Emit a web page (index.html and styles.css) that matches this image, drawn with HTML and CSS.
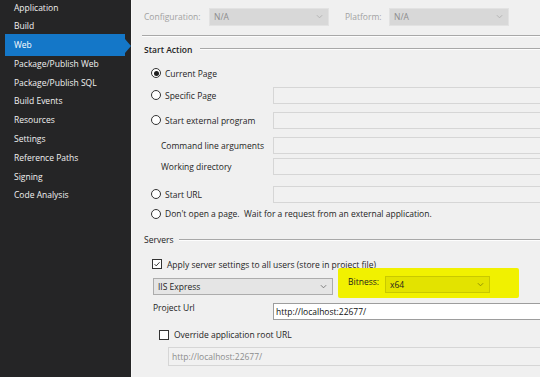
FILE: index.html
```html
<!DOCTYPE html>
<html lang="en">
<head>
    <meta charset="UTF-8">
    <title>Project Properties - Web</title>
    <link rel="stylesheet" href="styles.css">
</head>
<body>
    <div class="app">
        <nav class="sidebar">
            <div class="nav-list">
                <div class="nav-item">Application</div>
                <div class="nav-item">Build</div>
                <div class="nav-item active">Web</div>
                <div class="nav-item">Package/Publish Web</div>
                <div class="nav-item">Package/Publish SQL</div>
                <div class="nav-item">Build Events</div>
                <div class="nav-item">Resources</div>
                <div class="nav-item">Settings</div>
                <div class="nav-item">Reference Paths</div>
                <div class="nav-item">Signing</div>
                <div class="nav-item">Code Analysis</div>
            </div>
        </nav>

        <main class="page">
            <div class="config-bar">
                <span class="config-label">Configuration:</span>
                <div class="select disabled config-select">
                    <span>N/A</span>
                    <svg class="chev" viewBox="0 0 8 5"><path d="M1 1l3 3 3-3"/></svg>
                </div>
                <span class="config-label platform-label">Platform:</span>
                <div class="select disabled config-select">
                    <span>N/A</span>
                    <svg class="chev" viewBox="0 0 8 5"><path d="M1 1l3 3 3-3"/></svg>
                </div>
            </div>
            <div class="divider"></div>

            <!-- Start Action -->
            <div class="group-head strong"><span>Start Action</span><i class="rule"></i></div>

            <div class="row gap-3">
                <label class="opt"><span class="radio checked"></span>Current Page</label>
            </div>
            <div class="row gap-5">
                <label class="opt"><span class="radio"></span>Specific Page</label>
                <div class="field"></div>
            </div>
            <div class="row gap-8">
                <label class="opt"><span class="radio"></span>Start external program</label>
                <div class="field"></div>
            </div>
            <div class="row gap-8">
                <span class="opt sub">Command line arguments</span>
                <div class="field"></div>
            </div>
            <div class="row gap-4">
                <span class="opt sub">Working directory</span>
                <div class="field"></div>
            </div>
            <div class="row gap-11">
                <label class="opt"><span class="radio"></span>Start URL</label>
                <div class="field"></div>
            </div>
            <div class="row gap-2">
                <label class="opt wide"><span class="radio"></span>Don't open a page.&nbsp; Wait for a request from an external application.</label>
            </div>

            <!-- Servers -->
            <div class="group-head servers"><span>Servers</span><i class="rule"></i></div>

            <div class="row gap-4">
                <label class="opt check-opt"><span class="checkbox"><svg viewBox="0 0 10 10"><path d="M2 5.2l2 2.2 4.2-4.6"/></svg></span>Apply server settings to all users (store in project file)</label>
            </div>
            <div class="server-row">
                <div class="select iis-select">
                    <span>IIS Express</span>
                    <svg class="chev" viewBox="0 0 8 5"><path d="M1 1l3 3 3-3"/></svg>
                </div>
                <div class="bitness">
                    <span class="bitness-label">Bitness:</span>
                    <div class="select bitness-select">
                        <span>x64</span>
                        <svg class="chev" viewBox="0 0 8 5"><path d="M1 1l3 3 3-3"/></svg>
                    </div>
                </div>
            </div>
            <div class="row url-row">
                <span class="url-label">Project Url</span>
                <div class="field url-field">http://localhost:22677/</div>
            </div>
            <div class="row gap-6">
                <label class="opt override-opt"><span class="checkbox"></span>Override application root URL</label>
            </div>
            <div class="root-field">http://localhost:22677/</div>
        </main>
    </div>
</body>
</html>
```

FILE: styles.css
```css
* {
    margin: 0;
    padding: 0;
    box-sizing: border-box;
}

body {
    font-family: 'Open Sans', 'Noto Sans', sans-serif;
    font-size: 8.5px;
    color: #1e1e1e;
    background: #f0f0f0;
    overflow: hidden;
}

.app {
    display: flex;
    height: 377px;
}

/* Sidebar */
.sidebar {
    width: 132px;
    flex: none;
    background: #252526;
    border-right: 1px solid #f7f7f7;
}

.nav-list {
    margin-top: -1.4px;
}

.nav-item {
    position: relative;
    height: 18.77px;
    line-height: 18.77px;
    width: 120px;
    margin-left: 5px;
    padding-left: 9px;
    color: #f1f1f1;
    white-space: nowrap;
}

.nav-item.active {
    background: #1477c8;
    box-shadow: 0 -2px 0 #1477c8, 0 1px 0 #1477c8;
    color: #fff;
}

.nav-item.active::after {
    content: '';
    position: absolute;
    right: -6px;
    top: 50%;
    transform: translateY(-50%);
    border-left: 6px solid #1477c8;
    border-top: 7px solid transparent;
    border-bottom: 7px solid transparent;
}

/* Page */
.page {
    flex: 1;
    padding-left: 12px;
    overflow: hidden;
    display: flex;
    flex-direction: column;
}

.config-bar {
    height: 35px;
    display: flex;
    align-items: center;
    padding-bottom: 2px;
}

.config-label {
    width: 65px;
    color: #a2a2a2;
}

.platform-label {
    width: 44px;
    margin-left: 16px;
}

.select {
    height: 17px;
    display: flex;
    align-items: center;
    justify-content: space-between;
    padding: 0 5px 0 4px;
    border: 1px solid #acacac;
    background: #e5e5e5;
}

.select.disabled {
    background: #d8d8d8;
    border-color: #e2e2e2;
    color: #8c8c8c;
    height: 18px;
}

.config-select {
    width: 120px;
}

.chev {
    width: 7px;
    height: 5px;
    fill: none;
    stroke: #707070;
    stroke-width: 1;
}

.disabled .chev {
    stroke: #b0b0b0;
}

.divider {
    height: 2px;
    margin-left: -2px;
    border-top: 1px solid #a8a8a8;
    border-bottom: 1px solid #fdfdfd;
}

.group-head {
    height: 24px;
    display: flex;
    align-items: center;
    gap: 8px;
}

.group-head.strong span {
    font-weight: 600;
}

.group-head.servers {
    margin-top: 5.5px;
    gap: 6px;
}

.rule {
    flex: 1;
    height: 2px;
    border-top: 1px solid #a8a8a8;
    border-bottom: 1px solid #fdfdfd;
}

/* Option rows */
.row {
    height: 17px;
    display: flex;
    align-items: center;
}

.gap-2 { margin-top: 2.5px; }
.gap-3 { margin-top: 3.5px; }
.gap-4 { margin-top: 4px; }
.gap-5 { margin-top: 5px; }
.gap-6 { margin-top: 6.5px; }
.gap-8 { margin-top: 8px; }
.gap-11 { margin-top: 11px; }

.opt {
    width: 129px;
    flex: none;
    display: flex;
    align-items: center;
    padding-left: 7px;
    white-space: nowrap;
}

.opt.sub {
    padding-left: 17px;
}

.opt.wide {
    width: auto;
}

.radio {
    width: 10px;
    height: 10px;
    margin-right: 4px;
    border: 1px solid #333;
    border-radius: 50%;
    background: #fff;
    display: flex;
    align-items: center;
    justify-content: center;
}

.radio.checked::after {
    content: '';
    width: 5px;
    height: 5px;
    border-radius: 50%;
    background: #1e1e1e;
}

.field {
    flex: 1;
    height: 17px;
    margin-right: -6px;
    border: 1px solid #d6d6d6;
    background: #f1f1f1;
}

.checkbox {
    width: 10px;
    height: 10px;
    margin-right: 5px;
    border: 1px solid #333;
    background: #fff;
    display: flex;
}

.checkbox svg {
    width: 100%;
    height: 100%;
    fill: none;
    stroke: #1e1e1e;
    stroke-width: 1.1;
}

.check-opt {
    width: auto;
    padding-left: 8px;
}

.override-opt {
    width: auto;
    padding-left: 15px;
}

/* Server selection */
.server-row {
    height: 30px;
    margin-top: -5px;
    display: flex;
    align-items: flex-start;
}

.iis-select {
    width: 180px;
    margin: 10px 0 0 9px;
}

.bitness {
    width: 181px;
    height: 30px;
    margin-left: 5px;
    display: flex;
    align-items: center;
    padding: 1px 0 0 10px;
    background: #f1f100;
    border-radius: 2px;
}

.bitness-label {
    width: 37px;
    margin-top: -4px;
}

.bitness-select {
    width: 105px;
    margin-top: 2px;
    background: #e3e300;
    border-color: #c9c900;
}

.bitness-select .chev {
    stroke: #8a8a00;
}

.url-row {
    margin-top: 5px;
    align-items: flex-start;
}

.url-label {
    width: 129px;
    flex: none;
    padding-left: 9px;
    line-height: 10px;
}

.url-field {
    background: #fff;
    border-color: #9d9d9d;
    line-height: 15px;
    padding-left: 2px;
    color: #111;
}

.root-field {
    height: 19px;
    margin: 3.5px -6px 0 24px;
    border: 1px solid #d6d6d6;
    background: #f1f1f1;
    line-height: 17px;
    padding-left: 3px;
    color: #8d8d8d;
}
```
